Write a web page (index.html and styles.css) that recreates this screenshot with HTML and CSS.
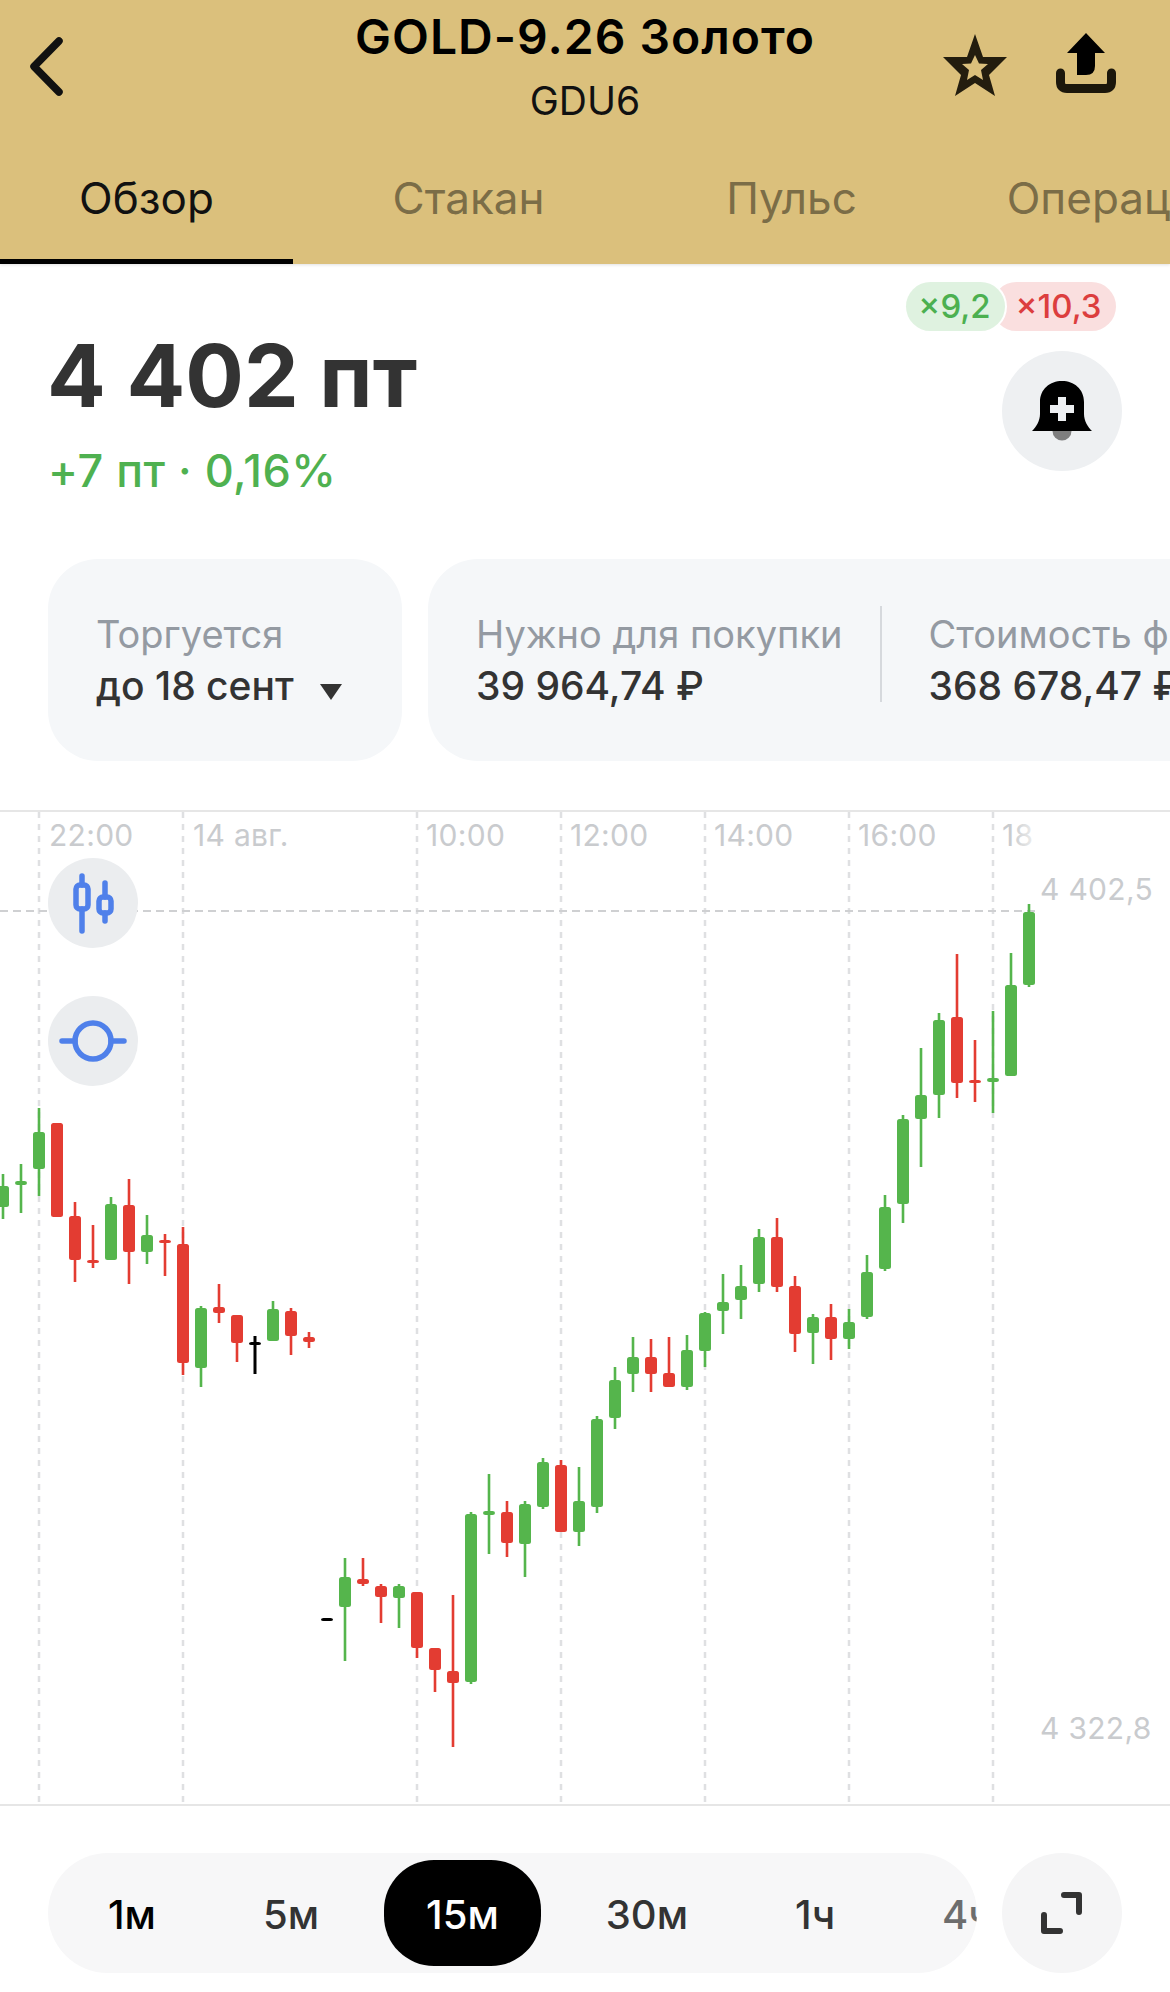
FILE: index.html
```html
<!DOCTYPE html>
<html lang="ru">
<head>
    <meta charset="UTF-8">
    <meta name="viewport" content="width=device-width, initial-scale=1.0">
    <title>GOLD-9.26 Золото</title>
    <link rel="stylesheet" href="styles.css">
</head>
<body>
    <header class="top">
        <div class="top-row">
            <svg class="back-icon" viewBox="0 0 33 59" width="33" height="59">
                <polyline points="29,4 4,29.5 29,55" />
            </svg>
            <div class="title-block">
                <div class="title">GOLD-9.26 Золото</div>
                <div class="ticker">GDU6</div>
            </div>
            <div class="top-actions">
                <svg class="star-icon" viewBox="0 0 64 62" width="64" height="62">
                    <path d="M32 0L40 23H64L46 41L52 62L32 49L12 62L18 41L0 23H24ZM32 21L28 29.5L19 30L26 36L24 46L32 41L40 46L38 36L45 30L36 29.5Z" />
                </svg>
                <svg class="share-icon" viewBox="0 0 60 60" width="60" height="60">
                    <path class="share-arrow" d="M30 0L49 20H39V33Q39 42 30 42H21V20H11Z" />
                    <path class="share-tray" d="M4.5 40V49Q4.5 55.5 11 55.5H49Q55.5 55.5 55.5 49V40" />
                </svg>
            </div>
        </div>
        <nav class="tabs">
            <div class="tab tab-active">Обзор</div>
            <div class="tab">Стакан</div>
            <div class="tab">Пульс</div>
            <div class="tab">Операции</div>
        </nav>
    </header>

    <section class="summary">
        <div class="quote">
            <div class="price">4 402 пт</div>
            <div class="change">+7 пт · 0,16%</div>
        </div>
        <div class="quote-side">
            <div class="chips">
                <span class="chip chip-green">×9,2</span>
                <span class="chip chip-red">×10,3</span>
            </div>
            <button class="round-btn">
                <svg viewBox="0 0 60 60" width="60" height="60">
                    <circle class="bell-clapper" cx="30" cy="50" r="9.5" />
                    <path class="bell-body" d="M30 0C42 0 52 8 52 21V33C52 40 56 46 60 50H0C4 46 8 40 8 33V21C8 8 18 0 30 0Z" />
                    <path class="bell-plus" d="M26 16H34V24H42V32H34V40H26V32H18V24H26Z" />
                </svg>
            </button>
        </div>
    </section>

    <section class="cards">
        <div class="card card-trade">
            <div class="card-item">
                <div class="card-label">Торгуется</div>
                <div class="card-value">до 18 сент <span class="caret"></span></div>
            </div>
        </div>
        <div class="card card-wide">
            <div class="card-item">
                <div class="card-label">Нужно для покупки</div>
                <div class="card-value">39 964,74 ₽</div>
            </div>
            <div class="card-divider"></div>
            <div class="card-item">
                <div class="card-label">Стоимость фьючерса</div>
                <div class="card-value">368 678,47 ₽</div>
            </div>
        </div>
    </section>

    <section class="chart">
        <svg id="chartSvg" class="chart-svg" viewBox="0 812 1170 994" width="1170" height="994">
            <defs>
                <linearGradient id="fadeLabel" x1="0" x2="1" y1="0" y2="0">
                    <stop offset="0.3" stop-color="#c9cbce" />
                    <stop offset="1" stop-color="#eceded" />
                </linearGradient>
            </defs>
            <g id="gridLayer"></g>
            <g class="axis-labels">
                <text x="49" y="846">22:00</text>
                <text x="193" y="846">14 авг.</text>
                <text x="426" y="846">10:00</text>
                <text x="570" y="846">12:00</text>
                <text x="714" y="846">14:00</text>
                <text x="858" y="846">16:00</text>
                <text x="1002" y="846" class="axis-fade">18</text>
                <text x="1040" y="900">4 402,5</text>
                <text x="1040" y="1739">4 322,8</text>
            </g>
            <g id="candleLayer"></g>
        </svg>
        <button class="chart-btn chart-btn-candles">
            <svg viewBox="0 0 90 90" width="90" height="90">
                <path d="M34 18V27M34 51V73M57 25V39M57 55V63" />
                <rect x="28" y="27" width="12" height="24" rx="4" />
                <rect x="51" y="39" width="12" height="16" rx="4" />
            </svg>
        </button>
        <button class="chart-btn chart-btn-level">
            <svg viewBox="0 0 90 90" width="90" height="90">
                <circle cx="45" cy="45" r="18" />
                <path d="M14 45H27M63 45H76" />
            </svg>
        </button>
    </section>

    <section class="periods">
        <div class="period-pill">
            <div class="period period-first">1м</div>
            <div class="period">5м</div>
            <div class="period period-active">15м</div>
            <div class="period">30м</div>
            <div class="period">1ч</div>
            <div class="period period-last">4ч</div>
        </div>
        <button class="round-btn round-btn-light">
            <svg class="expand-icon" viewBox="0 0 120 120" width="120" height="120">
                <path d="M62 42H77V59M42 62V78H58" />
            </svg>
        </button>
    </section>

    <script src="chart.js"></script>
</body>
</html>
```

FILE: styles.css
```css
* {
    box-sizing: border-box;
}

html, body {
    margin: 0;
    padding: 0;
    height: 1992px;
    overflow: hidden;
}

body {
    width: 1170px;
    background-color: white;
    color: #333;
    font-family: Inter, "Liberation Sans", sans-serif;
}

button {
    border: none;
    padding: 0;
    display: flex;
    align-items: center;
    justify-content: center;
}

/* header */
.top {
    height: 264px;
    background-color: #dbc07c;
    box-shadow: 0 1px 3px rgba(0, 0, 0, 0.12);
}

.top-row {
    height: 145px;
    padding: 0 30px;
    display: grid;
    grid-template-columns: 1fr auto 1fr;
}

.back-icon {
    margin-top: 37px;
}

.back-icon polyline {
    fill: none;
    stroke: #111;
    stroke-width: 7.5;
    stroke-linecap: round;
    stroke-linejoin: round;
}

.title-block {
    text-align: center;
    color: #000;
}

.title {
    font-size: 48px;
    font-weight: 600;
    letter-spacing: 1px;
    line-height: 56px;
    margin-top: 9px;
}

.ticker {
    font-size: 39px;
    line-height: 46px;
    margin-top: 13px;
    color: #111;
}

.top-actions {
    display: flex;
    justify-content: flex-end;
    align-items: flex-start;
    gap: 49px;
    padding: 33px 24px 0 0;
}

.star-icon {
    fill: #231d0e;
    fill-rule: evenodd;
    margin-top: 1px;
}

.share-arrow {
    fill: #000;
}

.share-tray {
    fill: none;
    stroke: #1c170b;
    stroke-width: 9;
    stroke-linecap: round;
}

.tabs {
    display: flex;
    height: 119px;
    font-size: 44px;
    overflow: hidden;
}

.tab {
    flex: 0 0 323px;
    text-align: center;
    color: #7b6d47;
    padding-top: 26px;
    white-space: nowrap;
}

.tab-active {
    flex-basis: 293px;
    margin-right: 14px;
    color: #111;
    border-bottom: 5px solid #000;
}

/* price block */
.summary {
    height: 295px;
    padding: 18px 48px 0;
    display: flex;
    justify-content: space-between;
}

.price {
    font-size: 87px;
    font-weight: 700;
    line-height: 100px;
    margin: 44px 0 0 -1px;
}

.change {
    font-size: 45px;
    font-weight: 500;
    letter-spacing: 0.5px;
    line-height: 52px;
    margin-top: 19px;
    color: #4fb150;
}

.quote-side {
    display: flex;
    flex-direction: column;
    align-items: flex-end;
    gap: 20px;
}

.chips {
    display: flex;
    margin-right: 6px;
}

.chip {
    height: 49px;
    border-radius: 25px;
    font-size: 33px;
    font-weight: 500;
    line-height: 49px;
    text-align: center;
}

.chip-green {
    width: 99px;
    padding-right: 2px;
    background-color: #dff2e0;
    color: #4cb050;
    box-shadow: 0 0 0 2px white;
    position: relative;
}

.chip-red {
    width: 124px;
    margin-left: -13px;
    padding-left: 9px;
    background-color: #fadfdf;
    color: #dc3e3e;
}

.round-btn {
    width: 120px;
    height: 120px;
    border-radius: 50%;
    background-color: #eef0f2;
}

.round-btn-light {
    background-color: #f5f5f6;
}

.bell-clapper {
    fill: #7e7e7e;
}

.bell-body {
    fill: #000;
}

.bell-plus {
    fill: #eef0f2;
}

/* info cards */
.cards {
    height: 202px;
    padding-left: 48px;
    display: flex;
    gap: 26px;
    overflow: hidden;
}

.card {
    height: 202px;
    background-color: #f5f7f9;
    border-radius: 50px;
    display: flex;
    align-items: center;
    flex-shrink: 0;
}

.card-trade {
    width: 354px;
    padding-left: 48px;
}

.card-wide {
    width: 1100px;
    padding-left: 48px;
}

.card-divider {
    width: 2px;
    height: 96px;
    margin: 0 46px 12px 38px;
    background-color: #d6d9dd;
    flex-shrink: 0;
}

.card-label {
    font-size: 38px;
    line-height: 46px;
    color: #949aa2;
    white-space: nowrap;
}

.card-value {
    font-size: 39px;
    font-weight: 500;
    line-height: 46px;
    margin-top: 6px;
    white-space: nowrap;
    color: #333;
}

.caret {
    display: inline-block;
    width: 0;
    height: 0;
    margin-left: 16px;
    border-left: 11px solid transparent;
    border-right: 11px solid transparent;
    border-top: 16px solid #333;
}

/* chart */
.chart {
    margin-top: 49px;
    height: 996px;
    border-top: 2px solid #e6e6e6;
    border-bottom: 2px solid #e6e6e6;
    position: relative;
}

.chart-svg {
    display: block;
}

.axis-labels text {
    font-size: 30px;
    fill: #c9cbce;
    letter-spacing: 0.3px;
}

.axis-labels .axis-fade {
    fill: url(#fadeLabel);
}

.chart-btn {
    position: absolute;
    left: 48px;
    width: 90px;
    height: 90px;
    border-radius: 50%;
    background-color: #ebedef;
}

.chart-btn svg {
    fill: none;
    stroke: #4f80ea;
    stroke-width: 5.5;
    stroke-linecap: round;
}

.chart-btn-candles {
    top: 46px;
}

.chart-btn-level {
    top: 184px;
}

/* period switch */
.periods {
    padding: 47px 48px 0;
    display: flex;
    gap: 25px;
}

.period-pill {
    width: 929px;
    height: 120px;
    padding: 7px 0 7px 18px;
    background-color: #f7f7f8;
    border-radius: 60px;
    display: flex;
    gap: 23px;
    overflow: hidden;
    flex-shrink: 0;
}

.period {
    height: 106px;
    padding: 0 42px;
    border-radius: 50px;
    font-size: 40px;
    font-weight: 500;
    line-height: 110px;
    white-space: nowrap;
}

.period-first {
    color: #000;
}

.period-active {
    background-color: #000;
    color: white;
}

.period-last {
    opacity: 0.7;
}

.expand-icon {
    fill: none;
    stroke: #333;
    stroke-width: 6;
    stroke-linecap: round;
    stroke-linejoin: round;
}
```

FILE: chart.js
```js
// x is 3 + 18 * index, each row: wick top, wick bottom, body top, body bottom, color
const GREEN = "#55b54c";
const RED = "#e33c32";
const BLACK = "#000";

const candles = [
    [1174, 1219, 1186, 1207, GREEN],
    [1164, 1213, 1181, 1185, GREEN],
    [1108, 1196, 1132, 1169, GREEN],
    [1123, 1217, 1123, 1217, RED],
    [1202, 1282, 1216, 1260, RED],
    [1225, 1268, 1260, 1263, RED],
    [1197, 1260, 1204, 1260, GREEN],
    [1179, 1284, 1205, 1252, RED],
    [1215, 1264, 1235, 1252, GREEN],
    [1234, 1276, 1240, 1243, RED],
    [1227, 1375, 1244, 1363, RED],
    [1306, 1387, 1308, 1368, GREEN],
    [1284, 1323, 1307, 1313, RED],
    [1315, 1362, 1315, 1343, RED],
    [1336, 1374, 1342, 1345, BLACK],
    [1301, 1341, 1309, 1341, GREEN],
    [1308, 1355, 1311, 1336, RED],
    [1332, 1348, 1337, 1342, RED],
    [1618, 1620, 1618, 1621, BLACK],
    [1558, 1661, 1577, 1607, GREEN],
    [1558, 1586, 1579, 1584, RED],
    [1584, 1623, 1586, 1597, RED],
    [1584, 1628, 1586, 1598, GREEN],
    [1592, 1658, 1592, 1648, RED],
    [1648, 1692, 1648, 1670, RED],
    [1595, 1747, 1671, 1683, RED],
    [1512, 1684, 1514, 1682, GREEN],
    [1474, 1554, 1511, 1515, GREEN],
    [1501, 1557, 1512, 1543, RED],
    [1501, 1577, 1504, 1544, GREEN],
    [1458, 1509, 1462, 1507, GREEN],
    [1460, 1532, 1465, 1532, RED],
    [1467, 1546, 1501, 1532, GREEN],
    [1416, 1513, 1419, 1507, GREEN],
    [1367, 1429, 1380, 1418, GREEN],
    [1337, 1392, 1357, 1374, GREEN],
    [1339, 1392, 1357, 1374, RED],
    [1337, 1387, 1373, 1387, RED],
    [1335, 1390, 1350, 1387, GREEN],
    [1312, 1367, 1313, 1351, GREEN],
    [1274, 1334, 1302, 1311, GREEN],
    [1265, 1319, 1286, 1300, GREEN],
    [1229, 1292, 1237, 1284, GREEN],
    [1218, 1292, 1237, 1287, RED],
    [1276, 1352, 1286, 1334, RED],
    [1314, 1364, 1317, 1333, GREEN],
    [1304, 1360, 1317, 1339, RED],
    [1309, 1349, 1322, 1339, GREEN],
    [1255, 1319, 1272, 1317, GREEN],
    [1195, 1271, 1207, 1269, GREEN],
    [1115, 1223, 1119, 1204, GREEN],
    [1048, 1167, 1095, 1119, GREEN],
    [1013, 1118, 1020, 1095, GREEN],
    [954, 1098, 1017, 1083, RED],
    [1040, 1102, 1080, 1083, RED],
    [1011, 1113, 1078, 1082, GREEN],
    [953, 1076, 985, 1076, GREEN],
    [904, 987, 912, 985, GREEN]
];

const gridX = [39, 183, 417, 561, 705, 849, 993];
const SVG_NS = "http://www.w3.org/2000/svg";

function addShape(parent, tag, attrs) {
    const el = document.createElementNS(SVG_NS, tag);
    Object.keys(attrs).forEach((key) => el.setAttribute(key, attrs[key]));
    parent.appendChild(el);
}

const gridLayer = document.getElementById("gridLayer");
gridX.forEach((x) => {
    addShape(gridLayer, "line", {
        x1: x, x2: x, y1: 812, y2: 1806,
        stroke: "#dfe0e2", "stroke-width": 2.5, "stroke-dasharray": "6 6"
    });
});
addShape(gridLayer, "line", {
    x1: 0, x2: 1037, y1: 911, y2: 911,
    stroke: "#cfd0d2", "stroke-width": 2, "stroke-dasharray": "8 5"
});

const candleLayer = document.getElementById("candleLayer");
candles.forEach((c, index) => {
    const x = 3 + 18 * index;
    const wickWidth = c[4] === BLACK ? 3 : 2.6;
    addShape(candleLayer, "rect", {
        x: x - wickWidth / 2, y: c[0], width: wickWidth, height: c[1] - c[0], fill: c[4]
    });
    addShape(candleLayer, "rect", {
        x: x - 6, y: c[2], width: 12, height: c[3] - c[2], rx: 2.5, fill: c[4]
    });
});
```
